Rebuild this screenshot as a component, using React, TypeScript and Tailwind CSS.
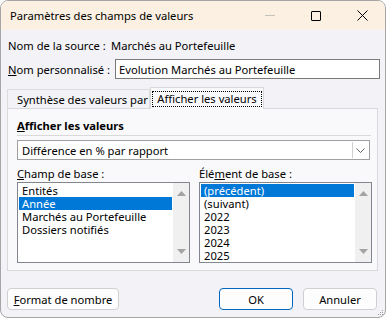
import React from 'react'

const font = { fontFamily: '"Noto Sans", "Open Sans", sans-serif' }

const champs = ['Entités', 'Année', 'Marchés au Portefeuille', 'Dossiers notifiés']
const elements = ['(précédent)', '(suivant)', '2022', '2023', '2024', '2025']

const ScrollArrows = () => (
  <div className="w-[16px] h-full bg-[#f0f0f0] flex flex-col items-center justify-between py-[8px]">
    <svg width="9" height="5" viewBox="0 0 9 5">
      <path d="M0 5 L4.5 0 L9 5 Z" fill="#a3a3a3" />
    </svg>
    <svg width="9" height="5" viewBox="0 0 9 5">
      <path d="M0 0 L4.5 5 L9 0 Z" fill="#a3a3a3" />
    </svg>
  </div>
)

const ListBox = ({ items, selected }: { items: string[]; selected: number }) => (
  <div className="w-[173px] h-[81px] border border-[#82868f] bg-white flex">
    <div className="flex-1 flex flex-col pl-px pt-px">
      {items.map((item, i) => (
        <div
          key={item}
          className={`h-[13px] leading-[13px] pl-[3px] ${
            i === selected ? 'bg-[#0078d7] text-white mr-[1px]' : 'text-black'
          }`}
        >
          {item}
        </div>
      ))}
    </div>
    <ScrollArrows />
  </div>
)

export default function App() {
  return (
    <div className="w-[386px] h-[319px] bg-white overflow-hidden" style={font}>
      <div className="relative w-[386px] h-[318px] rounded-[8px] border border-[#a6a6a6] bg-[#f3f2f6] overflow-hidden flex flex-col text-[11.2px] leading-[15px] whitespace-nowrap text-black">
        {/* title bar */}
        <div className="h-[29px] bg-[#fbf0e2] flex items-center shrink-0">
          <div className="pl-[9px] leading-none">Paramètres des champs de valeurs</div>
          <div className="ml-auto flex h-full">
            <div className="w-[46px] flex items-center justify-center">
              <div className="w-[10px] h-px bg-[#c4c0bb]" />
            </div>
            <div className="w-[46px] flex items-center justify-center">
              <div className="w-[10px] h-[10px] border border-black rounded-[1px]" />
            </div>
            <div className="w-[46px] flex items-center justify-center">
              <svg width="11" height="11" viewBox="0 0 11 11">
                <path d="M0.5 0.5 L10.5 10.5 M10.5 0.5 L0.5 10.5" stroke="#000" strokeWidth="1" />
              </svg>
            </div>
          </div>
        </div>

        <div className="flex items-center h-[15px] mt-[8px] pl-[7px]">
          <div className="w-[103px]">Nom de la source :</div>
          <div>Marchés au Portefeuille</div>
        </div>

        <div className="flex items-center mt-[6px] pl-[7px]">
          <div className="w-[107px]">
            <span className="underline">N</span>om personnalisé :
          </div>
          <div className="w-[265px] h-[20px] border border-[#7a7a7a] bg-white flex items-center pl-[3px]">
            Evolution Marchés au Portefeuille
          </div>
        </div>

        {/* tabs */}
        <div className="mt-[8px] ml-[6px] w-[371px]">
          <div className="flex items-end h-[21px]">
            <div className="h-[19px] w-[143px] border border-b-0 border-[#dcdcdc] flex items-center pl-[9px]">
              Synthèse des valeurs par
            </div>
            <div className="h-[22px] w-[114px] -mb-px border border-b-0 border-[#d9d9d9] bg-[#f9f9fb] flex items-center justify-center relative z-10">
              <div className="border border-dotted border-black px-[4px] h-[16px] leading-[14px]">
                Afficher les valeurs
              </div>
            </div>
          </div>

          <div className="h-[163px] border border-[#d9d9d9] bg-[#f9f9fb] pl-[9px] pr-[6px] pt-[9px]">
            <div className="font-bold leading-[15px]">
              <span className="underline">A</span>fficher les valeurs
            </div>
            <div className="h-px bg-[#d9d9d9] mt-[2px]" />
            <div className="mt-[4px] h-[20px] w-[353px] border border-[#a0a0a0] bg-white flex items-center">
              <div className="flex-1 pl-[4px]">Différence en % par rapport</div>
              <div className="w-[16px] h-[16px] mr-px border-l border-[#d0d0d0] flex items-center justify-center">
                <svg width="9" height="5" viewBox="0 0 9 5">
                  <path d="M0.5 0.5 L4.5 4.5 L8.5 0.5" stroke="#606060" fill="none" strokeWidth="1" />
                </svg>
              </div>
            </div>

            <div className="flex gap-[9px] mt-[6px]">
              <div className="flex flex-col">
                <div className="h-[15px] leading-[15px]">
                  <span className="underline">C</span>hamp de base :
                </div>
                <div className="mt-[1px]">
                  <ListBox items={champs} selected={1} />
                </div>
              </div>
              <div className="flex flex-col">
                <div className="h-[15px] leading-[15px]">
                  Élé<span className="underline">m</span>ent de base :
                </div>
                <div className="mt-[1px]">
                  <ListBox items={elements} selected={0} />
                </div>
              </div>
            </div>
          </div>
        </div>

        {/* buttons */}
        <div className="flex items-center mt-[17px] pl-[6px] pr-[8px]">
          <button className="w-[112px] h-[22px] rounded-[4px] border border-[#d0d0d0] bg-[#fdfdfd]">
            <span className="underline">F</span>ormat de nombre
          </button>
          <button className="ml-auto w-[74px] h-[22px] rounded-[4px] border border-[#0067c0] bg-[#fdfdfd]">
            OK
          </button>
          <button className="ml-[10px] w-[74px] h-[22px] rounded-[4px] border border-[#d0d0d0] bg-[#fdfdfd]">
            Annuler
          </button>
        </div>

        {/* resize grip */}
        <svg className="absolute right-[1px] bottom-[1px]" width="7" height="7" viewBox="0 0 7 7">
          <rect x="5" y="1" width="1" height="1" fill="#9a9a9a" />
          <rect x="3" y="3" width="1" height="1" fill="#9a9a9a" />
          <rect x="5" y="3" width="1" height="1" fill="#9a9a9a" />
          <rect x="1" y="5" width="1" height="1" fill="#9a9a9a" />
          <rect x="3" y="5" width="1" height="1" fill="#9a9a9a" />
          <rect x="5" y="5" width="1" height="1" fill="#9a9a9a" />
        </svg>
      </div>
    </div>
  )
}
